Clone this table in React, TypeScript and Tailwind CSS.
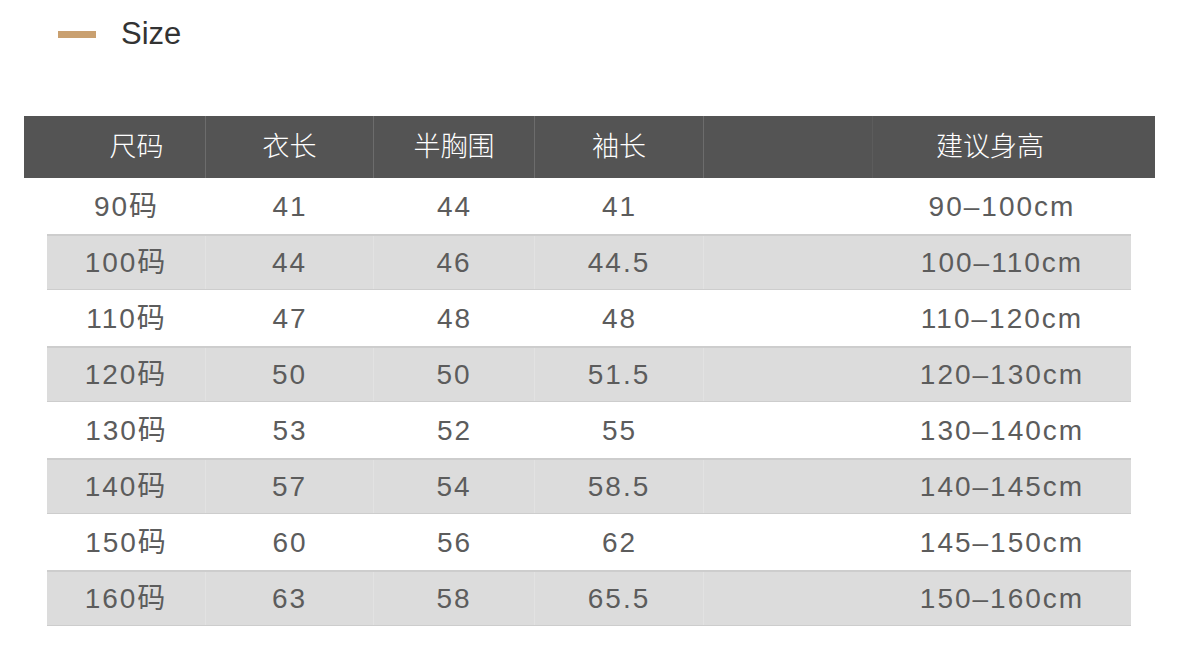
const rows = [
  ['90码', '41', '44', '41', '90–100cm'],
  ['100码', '44', '46', '44.5', '100–110cm'],
  ['110码', '47', '48', '48', '110–120cm'],
  ['120码', '50', '50', '51.5', '120–130cm'],
  ['130码', '53', '52', '55', '130–140cm'],
  ['140码', '57', '54', '58.5', '140–145cm'],
  ['150码', '60', '56', '62', '145–150cm'],
  ['160码', '63', '58', '65.5', '150–160cm'],
];

const font = { fontFamily: '"Liberation Sans", "Noto Sans CJK SC", sans-serif' };

export default function App() {
  return (
    <div className="w-[1179px] h-[660px] bg-white" style={font}>
      <div className="flex items-center h-[70px] pl-[58px] pb-[2px]">
        <div className="w-[38px] h-[7px] bg-[#c9a070]" />
        <span className="ml-[25px] text-[31px] text-[#333]">Size</span>
      </div>

      <div className="mt-[46px] ml-[24px] w-[1131px] h-[62px] bg-[#545454] grid grid-cols-[182px_168px_161px_169px_169px_282px] text-white text-[27px] font-light">
        <div className="flex items-center justify-center pl-[44px] border-r border-[#6c6c6c]">尺码</div>
        <div className="flex items-center justify-center border-r border-[#6c6c6c]">衣长</div>
        <div className="flex items-center justify-center border-r border-[#6c6c6c]">半胸围</div>
        <div className="flex items-center justify-center border-r border-[#6c6c6c]">袖长</div>
        <div className="border-r border-[#5c5c5c]" />
        <div className="flex items-center justify-center pr-[48px]">建议身高</div>
      </div>

      <div className="ml-[47px] w-[1084px]">
        {rows.map((r, i) => {
          const gray = i % 2 === 1;
          return (
            <div
              key={r[0]}
              className={
                gray
                  ? 'h-[56px] grid grid-cols-[159px_168px_161px_169px_169px_258px] bg-[#dcdcdc] border-t-2 border-b border-[#cdcdcd] text-[28px] tracking-[2px] text-[#5c5c5c]'
                  : 'h-[56px] grid grid-cols-[159px_168px_161px_169px_169px_258px] bg-white text-[28px] tracking-[2px] text-[#5c5c5c]'
              }
            >
              <div className={gray ? 'flex items-center justify-center pt-[1px] border-r border-[#e2e2e2]' : 'flex items-center justify-center pt-[1px]'}>{r[0]}</div>
              <div className={gray ? 'flex items-center justify-center pt-[1px] border-r border-[#e2e2e2]' : 'flex items-center justify-center pt-[1px]'}>{r[1]}</div>
              <div className={gray ? 'flex items-center justify-center pt-[1px] border-r border-[#e2e2e2]' : 'flex items-center justify-center pt-[1px]'}>{r[2]}</div>
              <div className={gray ? 'flex items-center justify-center pt-[1px] border-r border-[#e2e2e2]' : 'flex items-center justify-center pt-[1px]'}>{r[3]}</div>
              <div />
              <div className="flex items-center justify-center pt-[1px]">{r[4]}</div>
            </div>
          );
        })}
      </div>
    </div>
  );
}
